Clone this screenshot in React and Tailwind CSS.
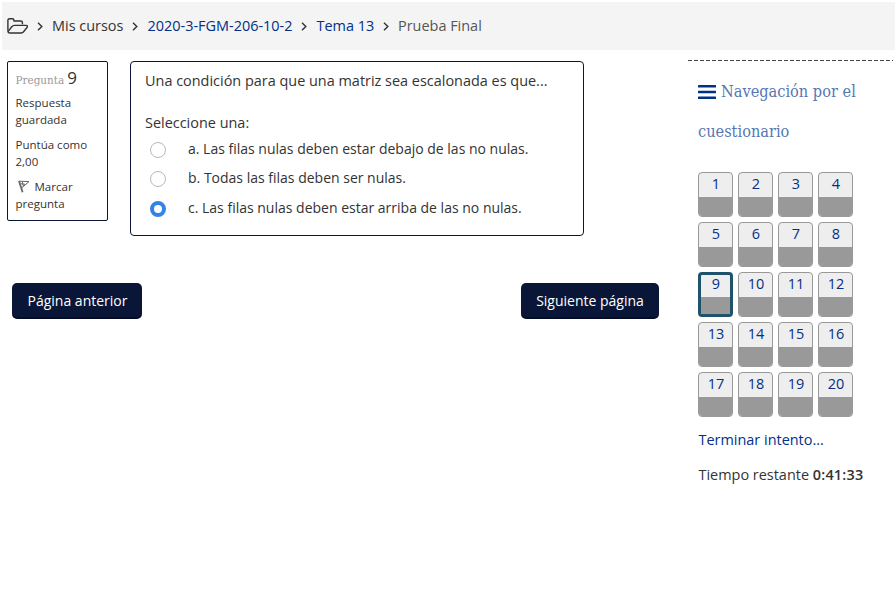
const questions = Array.from({ length: 20 }, (_, i) => i + 1);

const answers = [
  { text: "a. Las filas nulas deben estar debajo de las no nulas.", row: "h-[29px]", checked: false },
  { text: "b. Todas las filas deben ser nulas.", row: "h-[30px]", checked: false },
  { text: "c. Las filas nulas deben estar arriba de las no nulas.", row: "h-[29px]", checked: true },
];

function FolderIcon() {
  return (
    <svg className="h-[16px] w-[22px] shrink-0" viewBox="0 0 22 16" fill="none" stroke="#333" strokeWidth="1.4" strokeLinejoin="round">
      <path d="M.9 12.8V2.4Q.9 .8 2.4 .8H5.4Q6.9 .8 6.9 2.2V3H13.6Q15.4 3 15.4 4.6V6.3" />
      <path d="M.9 12.8Q.9 15 2.9 15H14.2Q15.6 15 16.6 13.8L19.8 9.8Q21.4 7.4 19 7.4H7.4Q5.9 7.4 4.8 8.7L1.2 13.4" />
    </svg>
  );
}

function Chevron() {
  return (
    <svg className="mr-px h-[9px] w-[6px] shrink-0" viewBox="0 0 6 9" fill="none" stroke="#333" strokeWidth="1.4">
      <path d="M1 .8L4.8 4.5L1 8.2" />
    </svg>
  );
}

function MenuIcon() {
  return (
    <svg className="h-[14px] w-[18px] shrink-0" viewBox="0 0 18 14" fill="#003087">
      <rect width="18" height="2.6" rx=".5" />
      <rect y="5.7" width="18" height="2.6" rx=".5" />
      <rect y="11.4" width="18" height="2.6" rx=".5" />
    </svg>
  );
}

function FlagIcon() {
  return (
    <svg className="h-[13px] w-[12px] shrink-0" viewBox="0 0 12 13" fill="none" stroke="#666">
      <path d="M1 1L4.6 12.3" strokeWidth="1.8" />
      <path d="M1.3 1.2L11 1.6L4 7.6M4.2 1.4L5.4 6.3M2.8 3.7L7.5 4.4" strokeWidth="1" />
    </svg>
  );
}

function Radio({ checked }) {
  return checked ? (
    <span className="size-4 shrink-0 rounded-full border-4 border-[#3584e4] bg-white" />
  ) : (
    <span className="size-4 shrink-0 rounded-full border border-[#bdb7b2] bg-white" />
  );
}

export default function App() {
  return (
    <div className="h-[596px] w-[895px] overflow-hidden bg-white pt-[2px] pl-[2px] font-['Open_Sans',sans-serif] text-[14.45px] leading-[22px] text-[#333]">
      <nav className="flex h-12 items-center bg-[#f4f4f4] pl-[5px] whitespace-nowrap">
        <FolderIcon />
        <span className="flex w-[23px] justify-center"><Chevron /></span>
        <span className="w-[72px]">Mis cursos</span>
        <span className="flex w-[23px] justify-center"><Chevron /></span>
        <a className="w-[146px] pl-[0.5px] text-[#003087]">2020-3-FGM-206-10-2</a>
        <span className="flex w-[23px] justify-center"><Chevron /></span>
        <a className="w-[58px] pl-[0.5px] text-[#003087]">Tema 13</a>
        <span className="flex w-[24px] justify-center"><Chevron /></span>
        <span className="text-[#555]">Prueba Final</span>
      </nav>

      <div className="flex pl-[5px]">
        <main className="w-[681px] pt-[11px]">
          <div className="flex items-start gap-[22px]">
            <aside className="h-[160px] w-[101px] rounded-[2px] border border-[#0a1637] pt-[5px] pl-[7.5px] text-[11.52px] leading-[17px]">
              <h3 className="flex h-[22px] items-baseline gap-[3px] font-['Roboto_Slab','DejaVu_Serif_Condensed','DejaVu_Serif',serif] text-[11.6px] leading-[22px] text-[#999]">
                <span>Pregunta</span>
                <span className="font-['Open_Sans',sans-serif] text-[17px] text-[#333]">9</span>
              </h3>
              <p className="mt-[5px]">Respuesta<br />guardada</p>
              <p className="mt-2">Puntúa como<br />2,00</p>
              <div className="mt-2">
                <div className="flex items-center gap-[5px] pl-[2px]"><FlagIcon /><span>Marcar</span></div>
                <div>pregunta</div>
              </div>
            </aside>
            <section className="h-[175px] w-[454px] rounded-[4px] border border-[#0a1637] pt-2 pl-[14px] whitespace-nowrap">
              <p>Una condición para que una matriz sea escalonada es que...</p>
              <p className="mt-5">Seleccione una:</p>
              <div className="mt-[4px]">
                {answers.map((a) => (
                  <div key={a.text} className={"flex items-start pl-[5px] " + a.row}>
                    <span className="flex h-6 items-center"><Radio checked={a.checked} /></span>
                    <span className="pl-[22px] text-sm leading-[22px]">{a.text}</span>
                  </div>
                ))}
              </div>
            </section>
          </div>
          <div className="mt-[47px] flex w-[652px] justify-between pl-[5px] text-sm">
            <button className="h-9 w-[130px] rounded-[5px] border-b-2 border-[#030b25] bg-[#0a1637] pt-[2px] pl-px text-white">Página anterior</button>
            <button className="h-9 w-[138px] rounded-[5px] border-b-2 border-[#030b25] bg-[#0a1637] pt-[2px] text-white">Siguiente página</button>
          </div>
        </main>

        <aside className="w-[205px] pt-[10px]">
          <div className="h-px bg-[repeating-linear-gradient(90deg,#444_0_4px,transparent_4px_6px)]" />
          <div className="pl-[10px]">
            <h2 className="mt-[11px] font-['Roboto_Slab','DejaVu_Serif_Condensed','DejaVu_Serif',serif] text-[16.2px] leading-10 text-[#5577b3]">
              <span className="flex items-center gap-[5px]">
                <MenuIcon />
                <span>Navegación por el</span>
              </span>
              <span className="block">cuestionario</span>
            </h2>
            <div className="mt-5 grid w-[155px] grid-cols-4 gap-[5px]">
              {questions.map((n) => (
                <a
                  key={n}
                  className={
                    "flex h-[45px] flex-col overflow-hidden rounded-[4px] bg-[#eee] text-center text-[#003087] " +
                    (n === 9 ? "border-[3px] border-[#1f536b]" : "border border-[#999]")
                  }
                >
                  <span className={n === 9 ? "h-[22px] shrink-0 pl-px leading-[18px]" : "h-6 shrink-0 pl-px leading-[22px]"}>{n}</span>
                  <span className="grow bg-[#999]" />
                </a>
              ))}
            </div>
            <a className="mt-3 block pl-[0.5px] text-[#003087]">Terminar intento...</a>
            <p className="mt-[13px] pl-[0.5px]">Tiempo restante <span className="font-semibold tracking-[0.2px]">0:41:33</span></p>
          </div>
        </aside>
      </div>
    </div>
  );
}
